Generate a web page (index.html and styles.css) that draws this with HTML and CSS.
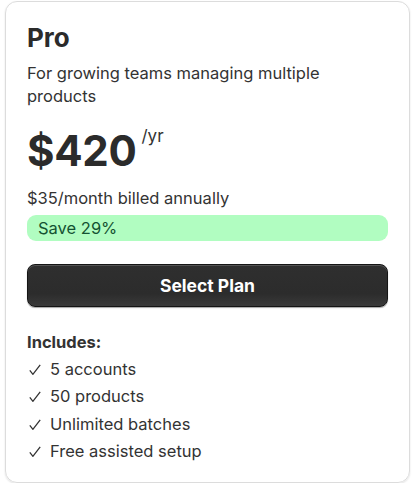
FILE: index.html
```html
<!DOCTYPE html>
<html>
<head>
<title>Pro plan</title>
<meta content="width=device-width, initial-scale=1" name="viewport" />
<link rel="stylesheet" href="styles.css">
</head>
<body>
<div class='card'>
  <div class='plan-name'>Pro</div>
  <div class='plan-desc'>For growing teams managing multiple products</div>

  <div class='price-row'>
    <span class='price'>$420</span>
    <span class='period'>/yr</span>
  </div>
  <div class='billed'>$35/month billed annually</div>
  <div class='save'>Save 29%</div>

  <button class='btn-select'>Select Plan</button>

  <div class='inc-title'>Includes:</div>
  <ul class='features'>
    <li><svg class='chk' width="12" height="11" viewBox="0 0 12 11"><path d="M0.8 6.4 L3.9 10.3 L11.2 0.8" /></svg>5 accounts</li>
    <li><svg class='chk' width="12" height="11" viewBox="0 0 12 11"><path d="M0.8 6.4 L3.9 10.3 L11.2 0.8" /></svg>50 products</li>
    <li><svg class='chk' width="12" height="11" viewBox="0 0 12 11"><path d="M0.8 6.4 L3.9 10.3 L11.2 0.8" /></svg>Unlimited batches</li>
    <li><svg class='chk' width="12" height="11" viewBox="0 0 12 11"><path d="M0.8 6.4 L3.9 10.3 L11.2 0.8" /></svg>Free assisted setup</li>
  </ul>
</div>
</body>
</html>
```

FILE: styles.css
```css
*, body {
  margin: 0;
  padding: 0;
  box-sizing: border-box;
}
body {
  font-family: Inter, "Liberation Sans", sans-serif;
  color: #2b2b2b;
  background: #fff;
}
.card {
  display: flex;
  flex-direction: column;
  margin: 1px 5px 0 5px;
  height: 482px;
  padding: 20px 21px 10px 21px;
  border: 1px solid #dcdcdc;
  border-radius: 12px;
  box-shadow: 0 1px 2px rgba(0,0,0,0.12);
}
.card > * {
  flex-shrink: 0;
}
.plan-name {
  font-size: 26px;
  font-weight: 700;
  line-height: 32px;
}
.plan-desc {
  margin-top: 8px;
  font-size: 16.5px;
  line-height: 22.5px;
  color: #333;
}
.price-row {
  display: flex;
  align-items: flex-start;
  margin-top: 16px;
}
.price {
  font-size: 42px;
  font-weight: 700;
  line-height: 56px;
  letter-spacing: -0.3px;
}
.period {
  margin-left: 5px;
  margin-top: 2px;
  font-size: 17px;
  line-height: 22px;
  color: #333;
}
.billed {
  margin-top: 8px;
  font-size: 16.5px;
  line-height: 22px;
  color: #333;
}
.save {
  margin-top: 6px;
  height: 26px;
  padding: 0 11px;
  border-radius: 9px;
  background: #b1fdc1;
  color: #145232;
  font-size: 16.5px;
  line-height: 26px;
}
.btn-select {
  margin-top: 23px;
  height: 43px;
  border: 1px solid #151515;
  border-radius: 8px;
  background: linear-gradient(#2f2f2f, #2c2c2c 70%, #3a3a3a);
  box-shadow: inset 0 1px 0 rgba(255,255,255,0.18), 0 1px 1px rgba(0,0,0,0.35);
  color: #fff;
  font-family: Inter, "Liberation Sans", sans-serif;
  font-size: 17.5px;
  font-weight: 700;
}
.inc-title {
  margin-top: 24px;
  font-size: 16.5px;
  font-weight: 700;
  line-height: 22px;
  color: #333;
}
.features {
  list-style: none;
  margin-top: 3px;
}
.features li {
  font-size: 16.5px;
  line-height: 27.3px;
  color: #333;
}
.chk {
  margin-left: 2px;
  margin-right: 9px;
  vertical-align: baseline;
  fill: none;
  stroke: #333;
  stroke-width: 1.3;
}
```
